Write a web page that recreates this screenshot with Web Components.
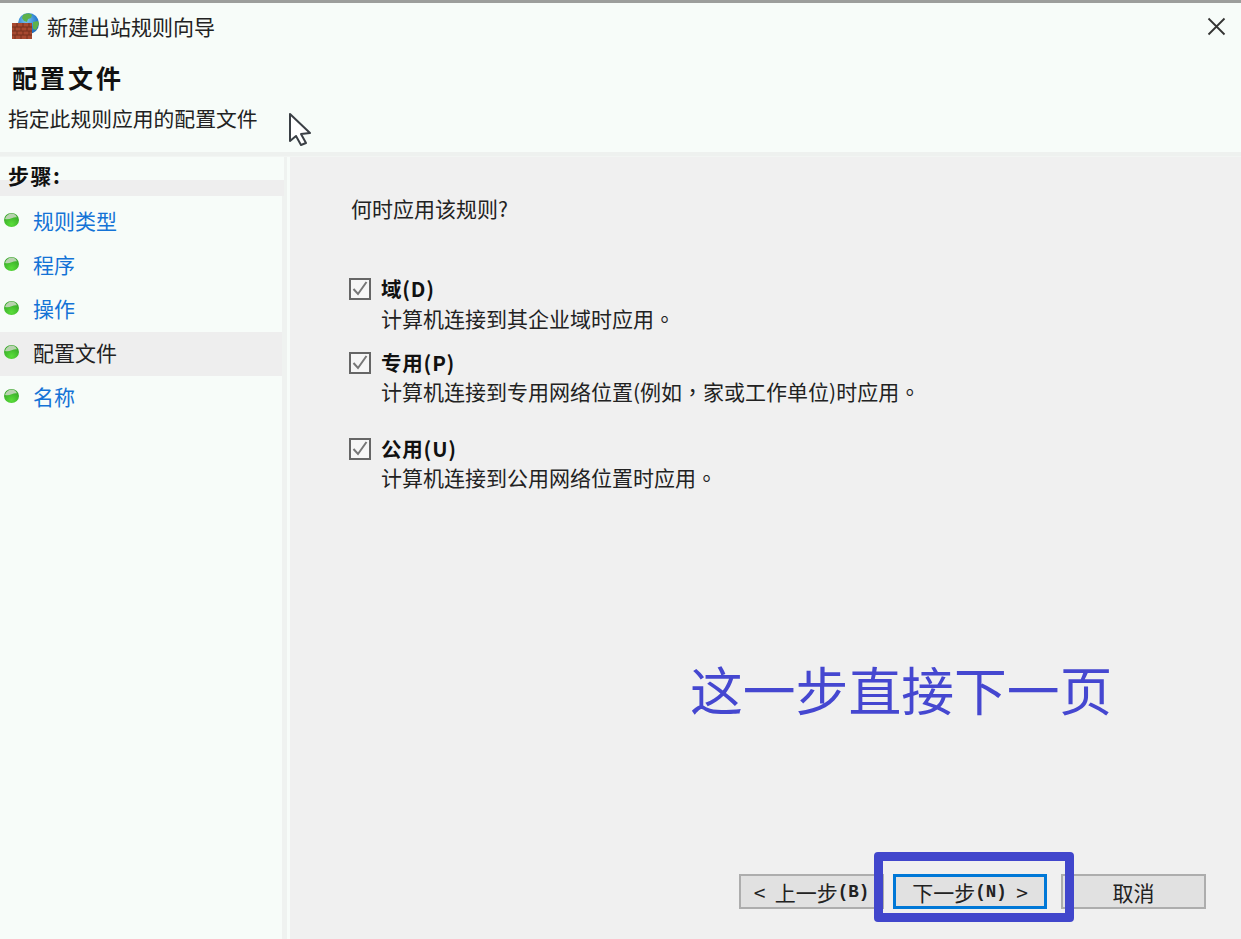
<!DOCTYPE html>
<html lang="zh">
<head>
<meta charset="utf-8">
<title>新建出站规则向导</title>
<style>
html,body{margin:0;padding:0;background:#f7fcf9}
body{font-family:"Noto Sans CJK SC","Noto Sans",sans-serif;color:#1c1c1c;width:1241px;height:939px;overflow:hidden}
.tc{font-family:"Noto Sans CJK TC",sans-serif}
.mono{font-family:"Liberation Mono",monospace;font-size:17.5px;font-weight:700}
</style>
</head>
<body>
<template id="t-wizard">
<style>
:host{display:grid;position:relative;width:1241px;height:939px;grid-template-rows:3px 149px 5px 1fr;background:#f7fcf9;overflow:hidden;box-sizing:border-box}
.topline{background:#9c9e9c;height:3px}
.head{display:flex;flex-direction:column;position:relative}
.titlebar{display:flex;align-items:center;height:48px;padding:0 14px 0 12px;gap:7px;font-size:21px;line-height:46px;color:#222}
.titlebar .t{flex:1;white-space:nowrap;padding-bottom:2px}
.titlebar svg{display:block;flex:none}
.h1{font-size:25px;font-weight:700;letter-spacing:3px;line-height:34px;padding:9px 0 0 12px;color:#111;white-space:nowrap}
.sub{font-size:20.8px;line-height:30px;padding:9px 0 0 8px;color:#222;white-space:nowrap}
.rule{background:#eef1ef;border-bottom:1px solid #f2f5f3}
.main{display:grid;grid-template-columns:285px 5px 1fr;min-height:0}
.side{display:flex;flex-direction:column}
.gap{border-left:2px solid #eff2f0}
.panel{background:#f0f0f0;display:flex;flex-direction:column;min-height:0}
</style>
<div class="topline"></div>
<div class="head">
  <div class="titlebar">
    <svg width="28" height="26" viewBox="0 0 28 26" aria-hidden="true" style="margin-top:-2px">
      <defs><radialGradient id="g" cx=".4" cy=".35" r=".8"><stop offset="0" stop-color="#7fc6f0"/><stop offset=".6" stop-color="#2a7fd0"/><stop offset="1" stop-color="#1c5fa8"/></radialGradient></defs>
      <circle cx="16.5" cy="10.5" r="10.5" fill="url(#g)"/>
      <path d="M11 2c3-2 7-2 9 0l-1 3-3 1-1 3-3-1-2-3zM21 9l5-1 1 3-3 6-3-1z" fill="#5eb24a"/>
      <rect x="0" y="10" width="20" height="16" fill="#a8492f"/>
      <path d="M0 14h20M0 18h20M0 22h20M5 10v4M11 10v4M17 10v4M3 14v4M9 14v4M15 14v4M5 18v4M11 18v4M17 18v4M3 22v4M9 22v4M15 22v4" stroke="#74301d" stroke-width="1" fill="none"/>
    </svg>
    <span class="t"><slot name="title"></slot></span>
    <svg width="21" height="21" viewBox="0 0 21 21" aria-hidden="true" style="margin-top:-1px"><path d="M2.5 2.5l16 16M18.5 2.5l-16 16" stroke="#333" stroke-width="1.8" fill="none"/></svg>
  </div>
  <div class="h1"><slot name="heading"></slot></div>
  <div class="sub"><slot name="sub"></slot></div>
</div>
<div class="rule"></div>
<div class="main">
  <div class="side"><slot name="side"></slot></div>
  <div class="gap"></div>
  <div class="panel"><slot></slot></div>
</div>
<slot name="overlay"></slot>
</template>

<template id="t-steps">
<style>
:host{display:flex;flex-direction:column;height:100%}
.hd{height:39px;font-size:21px;font-weight:700;color:#111;padding-left:8px;line-height:36px;letter-spacing:1.5px;box-sizing:border-box;background:linear-gradient(#f7fcf9 23px,#eeeeee 23px);border-right:1px solid #eff2f0}
.list{display:flex;flex-direction:column;padding-top:4px;flex:1;border-right:3px solid #eff2f0}
</style>
<div class="hd"><slot name="hd"></slot></div>
<div class="list"><slot></slot></div>
</template>

<template id="t-step">
<style>
:host{display:flex;align-items:center;height:44px;font-size:21px;line-height:40px;color:#1473d6;white-space:nowrap;box-sizing:border-box;padding-left:4px}
:host([current]){color:#222;background:#eeeeee}
svg{display:block;flex:none;margin-right:14px;margin-top:-4px}
span{padding-bottom:4px}
</style>
<svg width="15" height="14" viewBox="0 0 15 14" aria-hidden="true">
  <defs><radialGradient id="b" cx=".5" cy=".8" r=".7"><stop offset="0" stop-color="#5ade3a"/><stop offset="1" stop-color="#36a828"/></radialGradient></defs>
  <ellipse cx="7.5" cy="7" rx="7.5" ry="7" fill="url(#b)"/>
  <path d="M1 6C2 2.500 5 .6 7.500.6c2.500 0 4.800 1.400 5.500 3.900C9.500 3.500 5.500 7.500 1 6z" fill="#b9d2b0"/>
</svg>
<span><slot></slot></span>
</template>

<template id="t-check">
<style>
:host{display:grid;grid-template-columns:22px 1fr;column-gap:10px;font-size:21px;color:#222;white-space:nowrap}
.box{width:22px;height:22px;box-sizing:border-box;border:2px solid #666;background:#f6f6f6;align-self:center}
.box svg{display:block}
.lab{font-weight:700;line-height:28px;padding-bottom:2px;font-size:20.5px;color:#111;letter-spacing:.8px}
.desc{grid-column:2;line-height:28px;padding-bottom:2px;margin-top:var(--desc-gap,0)}
</style>
<div class="box"><svg width="18" height="18" viewBox="0 0 18 18" aria-hidden="true"><path d="M2.500 9l4.500 5 8.500-12" stroke="#777" stroke-width="2" fill="none"/></svg></div>
<div class="lab"><slot name="label"></slot></div>
<div class="desc"><slot></slot></div>
</template>

<template id="t-btn">
<style>
:host{display:flex;align-items:center;justify-content:center;box-sizing:border-box;height:35px;width:145px;background:#e1e1e1;border:2px solid #adadad;font-size:21px;color:#222;white-space:nowrap;font-family:"Noto Sans CJK SC",sans-serif}
:host([focus]){border:3px solid #0078d7;width:154px}
</style>
<slot></slot>
</template>

<template id="t-note">
<style>
:host{display:block;position:absolute;left:690px;top:652px;font-size:52.8px;line-height:72px;color:#4547d0;white-space:nowrap}
</style>
<slot></slot>
</template>

<template id="t-mark">
<style>
:host{display:block;position:absolute;left:874px;top:852px;width:200px;height:70px;box-sizing:border-box;border:9px solid #4146cc;border-radius:4px}
</style>
</template>

<template id="t-cursor">
<style>
:host{display:block;position:absolute;left:288px;top:111px;width:24px;height:38px}
svg{display:block}
</style>
<svg width="24" height="38" viewBox="0 0 24 38" aria-hidden="true"><path d="M2 3v27l6-5 5 9 5-2-5-9 9-1z" fill="#fff" stroke="#3a3f45" stroke-width="2" stroke-linejoin="round"/></svg>
</template>

<template id="t-panel">
<style>
:host{display:flex;flex-direction:column;height:100%;box-sizing:border-box;padding:36px 35px 30px 59px;font-size:21px;color:#222}
.q{line-height:30px;white-space:nowrap;padding-left:2px}
.list{display:flex;flex-direction:column;flex:1}
.btns{display:flex;padding-left:390px;gap:9px}
</style>
<div class="q"><slot name="q"></slot></div>
<div class="list"><slot></slot></div>
<div class="btns"><slot name="btns"></slot></div>
</template>

<x-wizard>
  <span slot="title">新建出站规则向导</span>
  <span slot="heading">配置文件</span>
  <span slot="sub">指定此规则应用的配置文件</span>
  <x-steps slot="side">
    <span slot="hd">步骤:</span>
    <x-step>规则类型</x-step>
    <x-step>程序</x-step>
    <x-step>操作</x-step>
    <x-step current>配置文件</x-step>
    <x-step>名称</x-step>
  </x-steps>
  <x-panel>
    <div slot="q">何时应用该规则?</div>
    <x-check style="margin-top:51px"><span slot="label">域(D)</span>计算机连接到其企业域时应用<span class="tc" lang="zh-Hant">。</span></x-check>
    <x-check style="margin-top:14px;--desc-gap:-1px"><span slot="label">专用(P)</span>计算机连接到专用网络位置(例如<span class="tc" lang="zh-Hant">，</span>家或工作单位)时应用<span class="tc" lang="zh-Hant">。</span></x-check>
    <x-check style="margin-top:27px;--desc-gap:-1px"><span slot="label">公用(U)</span>计算机连接到公用网络位置时应用<span class="tc" lang="zh-Hant">。</span></x-check>
    <x-btn slot="btns">&lt;&nbsp;&nbsp;上一步<span class="mono">(B)</span></x-btn>
    <x-btn slot="btns" focus>下一步<span class="mono">(N)</span>&nbsp;&nbsp;&gt;</x-btn>
    <x-btn slot="btns" style="margin-left:5px">取消</x-btn>
  </x-panel>
  <x-cursor slot="overlay"></x-cursor>
  <x-note slot="overlay">这一步直接下一页</x-note>
  <x-mark slot="overlay"></x-mark>
</x-wizard>

<script>
function reg(name, tid){
  customElements.define(name, class extends HTMLElement{
    constructor(){
      super();
      this.attachShadow({mode:"open"}).appendChild(document.getElementById(tid).content.cloneNode(true));
    }
  });
}
[["x-wizard","t-wizard"],["x-steps","t-steps"],["x-step","t-step"],["x-check","t-check"],["x-btn","t-btn"],["x-note","t-note"],["x-mark","t-mark"],["x-cursor","t-cursor"],["x-panel","t-panel"]].forEach(function(p){reg(p[0],p[1]);});
</script>
</body>
</html>
